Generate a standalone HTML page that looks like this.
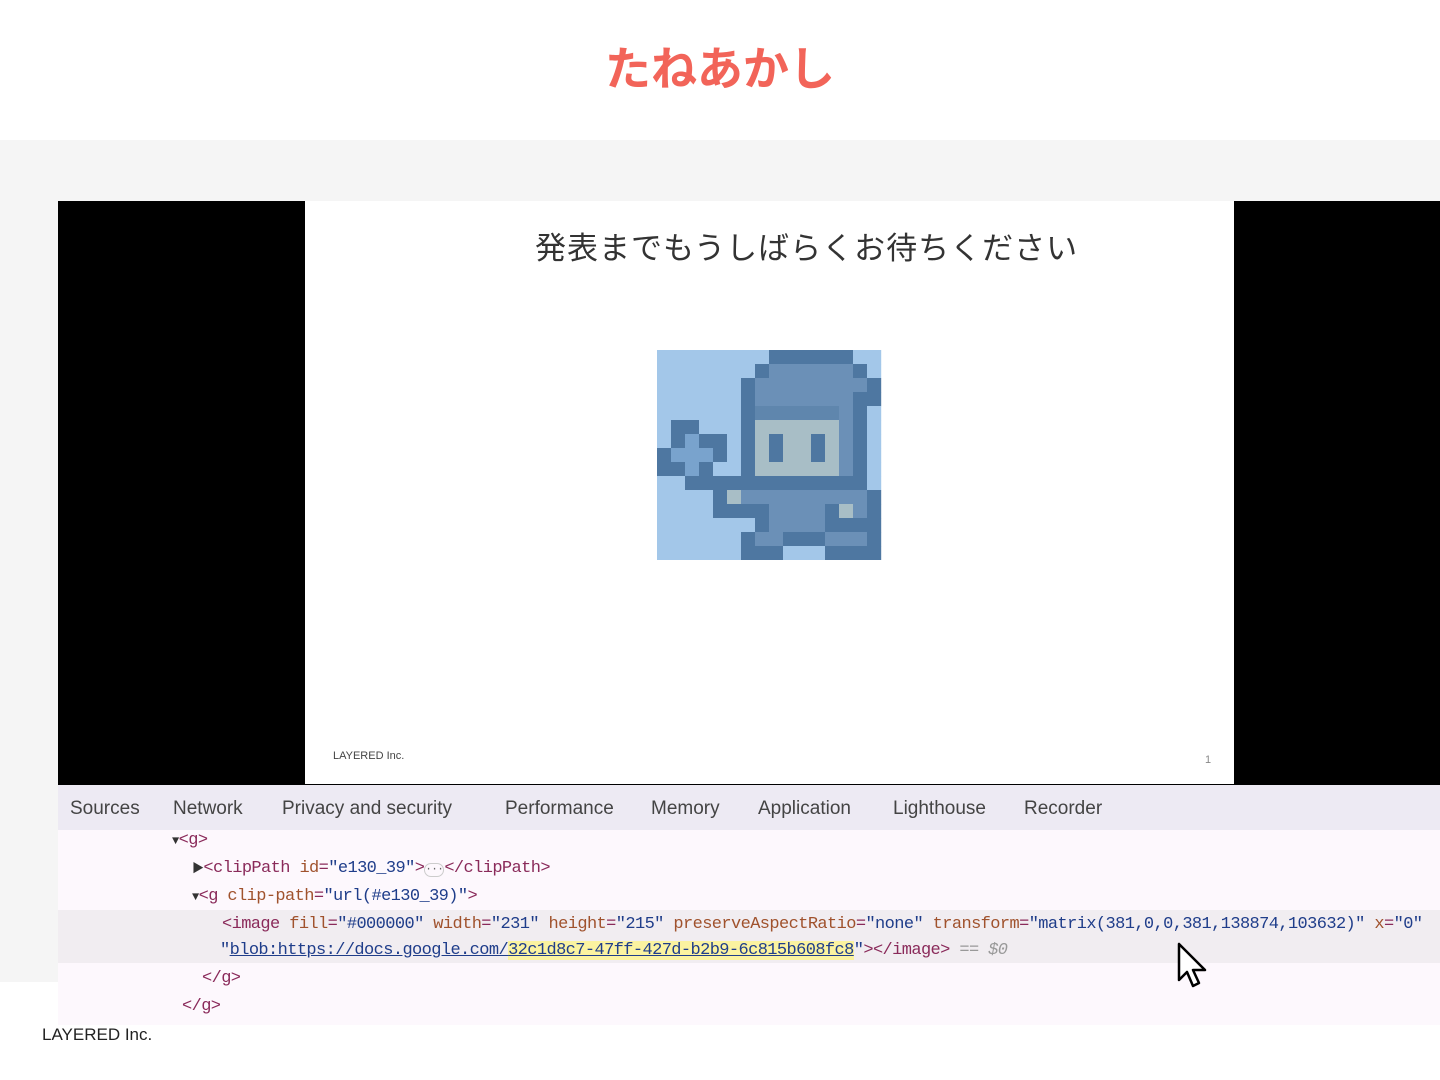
<!DOCTYPE html>
<html><head><meta charset="utf-8"><style>
body{margin:0;width:1440px;height:1080px;position:relative;background:#fff;overflow:hidden;font-family:"Liberation Sans","Noto Sans CJK JP",sans-serif}
.a{position:absolute;white-space:nowrap}
.code{font-family:"Liberation Mono","Noto Sans CJK JP",monospace;font-size:17px;letter-spacing:-0.6px;color:#8a2a5a}
.at{color:#a0522d}.v{color:#1f3d8a}.tg{color:#8a2a5a}
.tab{position:absolute;top:798px;font-size:19px;color:#444}
</style></head><body>
<div class="a" style="left:0;top:33px;width:1440px;text-align:center;font-size:46px;font-weight:bold;color:#f26459;font-family:'Noto Sans CJK JP',sans-serif">たねあかし</div>
<div class="a" style="left:0;top:140px;width:1440px;height:842px;background:#f5f5f5"></div>
<div class="a" style="left:58px;top:201px;width:1382px;height:584px;background:#000"></div>
<div class="a" style="left:305px;top:201px;width:929px;height:583px;background:#fff"></div>
<div class="a" style="left:535px;top:223px;font-size:31px;color:#333;font-family:'Noto Sans CJK JP',sans-serif;letter-spacing:1px">発表までもうしばらくお待ちください</div>
<div class="a" style="left:333px;top:750px;font-size:11px;color:#444">LAYERED Inc.</div>
<div class="a" style="left:1205px;top:754px;font-size:11px;color:#888">1</div>
<svg class="a" style="left:657px;top:350px" width="225" height="210" id="px"></svg>
<div class="a" style="left:58px;top:785px;width:1382px;height:45px;background:#edeaf3"></div>
<div class="tab" style="left:70px">Sources</div>
<div class="tab" style="left:173px">Network</div>
<div class="tab" style="left:282px">Privacy and security</div>
<div class="tab" style="left:505px">Performance</div>
<div class="tab" style="left:651px">Memory</div>
<div class="tab" style="left:758px">Application</div>
<div class="tab" style="left:893px">Lighthouse</div>
<div class="tab" style="left:1024px">Recorder</div>
<div class="a" style="left:58px;top:830px;width:1382px;height:195px;background:#fdf8fd"></div>
<div class="a" style="left:58px;top:910px;width:1382px;height:53px;background:#f1edf1"></div>
<div class="a code" style="left:172px;top:831px"><span style="color:#333;font-size:12px">▼</span>&lt;g&gt;</div>
<div class="a code" style="left:192px;top:859px"><span style="color:#333;font-size:12px">▶</span>&lt;clipPath <span class="at">id</span>=<span class="v">"e130_39"</span>&gt;<span style="color:#666;border:1px solid #ccc;border-radius:7px;font-size:11px">···</span>&lt;/clipPath&gt;</div>
<div class="a code" style="left:192px;top:887px"><span style="color:#333;font-size:12px">▼</span>&lt;g <span class="at">clip-path</span>=<span class="v">"url(#e130_39)"</span>&gt;</div>
<div class="a code" style="left:222px;top:915px">&lt;image <span class="at">fill</span>=<span class="v">"#000000"</span> <span class="at">width</span>=<span class="v">"231"</span> <span class="at">height</span>=<span class="v">"215"</span> <span class="at">preserveAspectRatio</span>=<span class="v">"none"</span> <span class="at">transform</span>=<span class="v">"matrix(381,0,0,381,138874,103632)"</span> <span class="at">x</span>=<span class="v">"0"</span></div>
<div class="a code" style="left:220px;top:941px"><span class="v">"<u>blob:https://docs.google.com/<span style="background:#fbf3a0">32c1d8c7-47ff-427d-b2b9-6c815b608fc8</span></u>"</span>&gt;&lt;/image&gt; <span style="color:#999;font-style:italic">== $0</span></div>
<div class="a code" style="left:202px;top:969px">&lt;/g&gt;</div>
<div class="a code" style="left:182px;top:997px">&lt;/g&gt;</div>
<svg class="a" style="left:1176px;top:942px" width="36" height="48"><path d="M3 2 L3 38 L11 30 L17 44 L23 41 L17 28 L29 28 Z" fill="#fff" stroke="#000" stroke-width="2.5" stroke-linejoin="round"/></svg>
<div class="a" style="left:42px;top:1025px;font-size:17px;color:#222">LAYERED Inc.</div>
<script>
var g=["LLLLLLLLDDDDDDLL","LLLLLLLDMMMMMMDL","LLLLLLDMMMMMMMMD","LLLLLLDMMMMMMMDD","LLLLLLDNNNNNNMDL","LDDLLLDFFFFFFMDL","LDSDDLDFEFFEFMDL","DSSSDLDFEFFEFMDL","DDSDLLDFFFFFFMDL","LLDDDDDDDDDDDDDL","LLLLDFMMMMMMMMMD","LLLLDDDDMMMMDFMD","LLLLLLLDMMMMDDDD","LLLLLLDMMDDDMMMD","LLLLLLDDDLLLDDDD"];
var c={L:"#a3c7e9",D:"#4e77a1",M:"#6b90b7",N:"#5f86ad",F:"#a8bec6",E:"#4e77a1",S:"#79a3cd"};
var s="";g.forEach(function(r,y){for(var x=0;x<16;x++){s+='<rect x="'+x*14+'" y="'+y*14+'" width="14.2" height="14.2" fill="'+c[r[x]]+'"/>';}});
document.getElementById("px").innerHTML=s;
</script>
</body></html>
